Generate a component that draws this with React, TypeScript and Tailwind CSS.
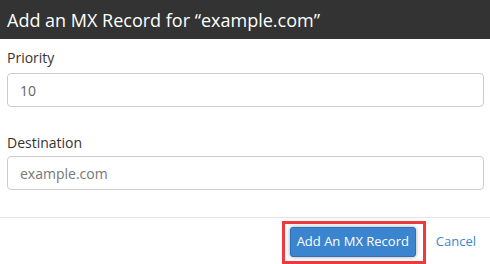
import React from "react";

export default function App() {
  return (
    <div className="w-[490px] h-[264px] bg-white overflow-hidden" style={{ fontFamily: '"Open Sans", sans-serif' }}>
      <div className="h-[39px] bg-[#333333] flex items-center px-[7px]">
        <h1 className="text-white text-[18px] leading-none">Add an MX Record for “example.com”</h1>
      </div>
      <div className="px-[7px] pt-[9px]">
        <label className="block text-[14px] leading-[20px] text-[#333]">Priority</label>
        <input
          readOnly
          value="10"
          className="mt-[5px] block w-[477px] h-[34px] border border-[#cccccc] rounded-[4px] px-[12px] text-[14px] text-[#666] outline-none"
        />
        <label className="block mt-[26px] text-[14px] leading-[20px] text-[#333]">Destination</label>
        <input
          readOnly
          placeholder="example.com"
          className="mt-[3px] block w-[477px] h-[34px] border border-[#cccccc] rounded-[4px] px-[12px] text-[14px] text-[#555] placeholder:text-[#777] outline-none"
        />
      </div>
      <div className="mt-[27px] border-t border-[#e5e5e5] flex justify-end items-start pt-[3px] pr-[14px]">
        <div className="border-[3px] border-[#f0393f] pl-[5px] pr-[7px] pt-[3px] pb-[4px]">
          <button className="w-[126px] h-[30px] bg-[#3b85d0] border border-[#2f6fb3] rounded-[3px] text-white text-[13px] shadow-[0_0_4px_rgba(0,0,0,0.35)]">
            Add An MX Record
          </button>
        </div>
        <a className="ml-[10px] mt-[11px] text-[13px] leading-[18px] text-[#3a88cb]">Cancel</a>
      </div>
    </div>
  );
}
